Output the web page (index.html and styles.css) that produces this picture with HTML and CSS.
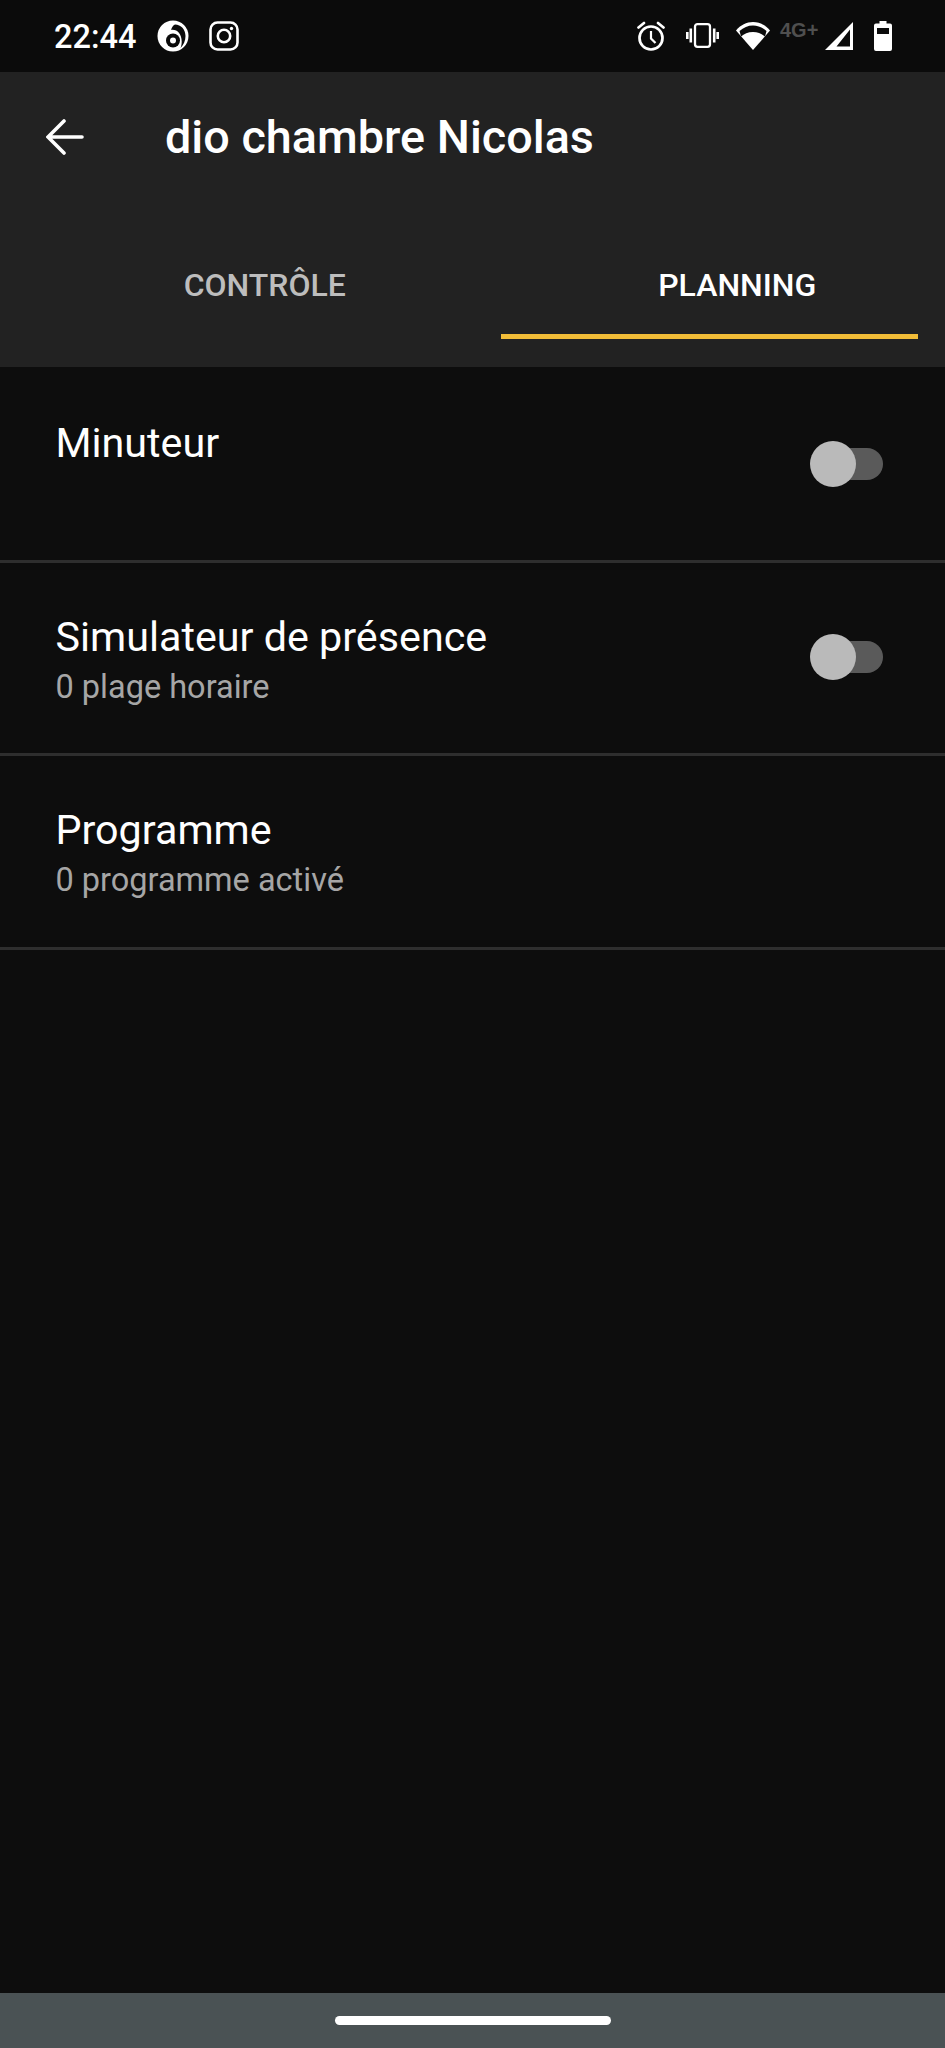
FILE: index.html
```html
<!DOCTYPE html>
<html lang="fr">
<head>
<meta charset="utf-8">
<title>dio chambre Nicolas</title>
<link rel="stylesheet" href="styles.css">
</head>
<body>
<div class="phone">
  <div class="status">
    <span class="clock">22:44</span>
    <svg class="ic-logo" viewBox="0 0 32 32"><circle cx="16" cy="16" r="15.500" fill="#fff"/><path d="M18 4.500c6 0 10.500 5 10.500 11.500 0 5-2 9-5 12 .8-2 1.200-4 1.200-6.500C24.700 14 20 9 14 10c1-3 2-4.500 4-5.500Z" fill="#0b0b0b"/><circle cx="16" cy="20.500" r="7" fill="#0b0b0b"/><circle cx="16" cy="20.500" r="3" fill="#fff"/></svg>
    <svg class="ic-insta" viewBox="0 0 30 30" fill="none" stroke="#fff"><rect x="1.500" y="1.500" width="27" height="27" rx="7" stroke-width="2.600"/><circle cx="15" cy="15" r="6.200" stroke-width="2.600"/><circle cx="22.500" cy="7.500" r="1.700" fill="#fff" stroke="none"/></svg>
    <span class="spacer"></span>
    <svg class="ic-alarm" viewBox="0 0 28 30" fill="none" stroke="#fff" stroke-width="2.700"><circle cx="14" cy="17" r="11.500"/><path d="M14 10v7.500l4.500 4.500" stroke-width="2.200"/><path d="M1.500 6.500 7 2M26.500 6.500 21 2" stroke-linecap="round"/></svg>
    <svg class="ic-vib" viewBox="0 0 33 25" fill="none" stroke="#fff"><rect x="9" y="1.200" width="15" height="22.600" rx="2.500" stroke-width="2.300"/><path d="M4.800 5.500v14M28.200 5.500v14" stroke-width="2.600"/><path d="M1.300 9v7M31.700 9v7" stroke-width="2.600"/></svg>
    <svg class="ic-wifi" viewBox="0 0 34 29"><path d="M17 29 0 9.500C4.500 4 10.500 1 17 1s12.500 3 17 8.500Z" fill="#fff"/><path d="M17 11C12 11 8 13 5 15.500L3.500 10C7.500 6.500 12 4.500 17 4.500s9.500 2 13.500 5.500L29 15.500C26 13 22 11 17 11Z" fill="#0b0b0b"/></svg>
    <span class="net">4G+</span>
    <svg class="ic-signal" viewBox="0 0 28 28"><path fill-rule="evenodd" d="M28 0v28H0ZM25 7.500 11.500 24.500H25Z" fill="#fff"/></svg>
    <svg class="ic-batt" viewBox="0 0 18 30"><path fill-rule="evenodd" d="M5.500 0h7v2.500h3.500A2 2 0 0 1 18 4.500V28a2 2 0 0 1-2 2H2a2 2 0 0 1-2-2V4.500a2 2 0 0 1 2-2h3.500ZM3 7v6h12V7Z" fill="#fff"/></svg>
  </div>

  <header class="appbar">
    <div class="toolbar">
      <svg class="back" viewBox="0 0 38 36" fill="none" stroke="#fff" stroke-width="3.600" stroke-linecap="round"><path d="M36 18H3M18 2 2 18l16 16"/></svg>
      <h1 class="title">dio chambre Nicolas</h1>
    </div>
    <nav class="tabs">
      <span class="tab">CONTRÔLE</span>
      <span class="tab tab-active">PLANNING</span>
      <span class="indicator"></span>
    </nav>
  </header>

  <main class="list">
    <section class="row">
      <div class="row-text"><div class="row-title">Minuteur</div></div>
      <span class="switch"><span class="thumb"></span></span>
    </section>
    <section class="row">
      <div class="row-text"><div class="row-title">Simulateur de présence</div><div class="row-sub">0 plage horaire</div></div>
      <span class="switch"><span class="thumb"></span></span>
    </section>
    <section class="row">
      <div class="row-text"><div class="row-title">Programme</div><div class="row-sub">0 programme activé</div></div>
    </section>
  </main>

  <div class="navbar"><span class="handle"></span></div>
</div>
</body>
</html>
```
FILE: styles.css
```css
* { box-sizing: border-box; }
html, body { margin: 0; padding: 0; background: #0d0d0d; }
.phone {
  width: 945px;
  height: 2048px;
  display: flex;
  flex-direction: column;
  overflow: hidden;
  font-family: Roboto, "Liberation Sans", sans-serif;
  color: #fff;
}
.status {
  height: 72px;
  flex: none;
  display: flex;
  align-items: flex-start;
  padding: 0 53px 0 54px;
  background: #0b0b0b;
}
.clock { font-size: 32.5px; font-weight: 500; line-height: 36px; margin-top: 19px; width: 81px; }
.spacer { flex: 1; }
.status svg { display: block; flex: none; }
.ic-logo { width: 32px; height: 32px; margin: 20px 0 0 22px; }
.ic-insta { width: 30px; height: 30px; margin: 21px 0 0 20px; }
.ic-alarm { width: 28px; height: 30px; margin-top: 21px; }
.ic-vib { width: 33px; height: 25px; margin: 23px 0 0 21px; }
.ic-wifi { width: 34px; height: 29px; margin: 21px 0 0 17px; }
.net { font-size: 20px; font-weight: 700; color: #4f4f4f; line-height: 16px; margin: 22px 0 0 10px; width: 45px; font-family: "Liberation Sans", sans-serif; }
.ic-signal { width: 28px; height: 28px; margin: 22px 0 0 0; }
.ic-batt { width: 18px; height: 30px; margin: 21px 0 0 21px; }

.appbar {
  height: 295px;
  flex: none;
  background: #222;
  display: flex;
  flex-direction: column;
}
.toolbar {
  height: 130px;
  flex: none;
  display: flex;
  align-items: center;
  padding-left: 46px;
  gap: 81px;
}
.back { width: 38px; height: 36px; flex: none; display: block; }
.title { margin: 0; font-size: 46.75px; font-weight: 500; line-height: 54px; }
.tabs {
  position: relative;
  flex: 1;
  display: grid;
  grid-template-columns: 1fr 1fr;
}
.tab {
  padding: 64px 0 0 57px;
  text-align: center;
  font-size: 32px;
  font-weight: 500;
  line-height: 38px;
  color: #bdbdbd;
}
.tab-active { color: #fff; }
.indicator {
  position: absolute;
  left: 501px;
  width: 417px;
  top: 132px;
  height: 5px;
  background: #f2bd38;
}

.list { flex: 1; padding-top: 2px; }
.row {
  height: 193.5px;
  display: flex;
  justify-content: space-between;
  align-items: flex-start;
  padding: 52px 62px 0 55.5px;
  border-bottom: 3px solid #2e2e2e;
}
.row-title { font-size: 41.25px; line-height: 44px; color: #fff; }
.row-sub { font-size: 32.5px; line-height: 38px; color: #a6a6a6; margin-top: 9px; }
.switch {
  position: relative;
  display: block;
  width: 62px;
  height: 32px;
  margin-top: 26.5px;
  border-radius: 16px;
  background: #5a5a5a;
}
.thumb {
  position: absolute;
  left: -11px;
  top: -7px;
  width: 46px;
  height: 46px;
  border-radius: 50%;
  background: #bababa;
}

.navbar {
  height: 55px;
  flex: none;
  background: #4a5254;
  display: flex;
  justify-content: center;
  padding-top: 23px;
}
.handle { width: 276px; height: 9px; border-radius: 5px; background: #fff; }
```
